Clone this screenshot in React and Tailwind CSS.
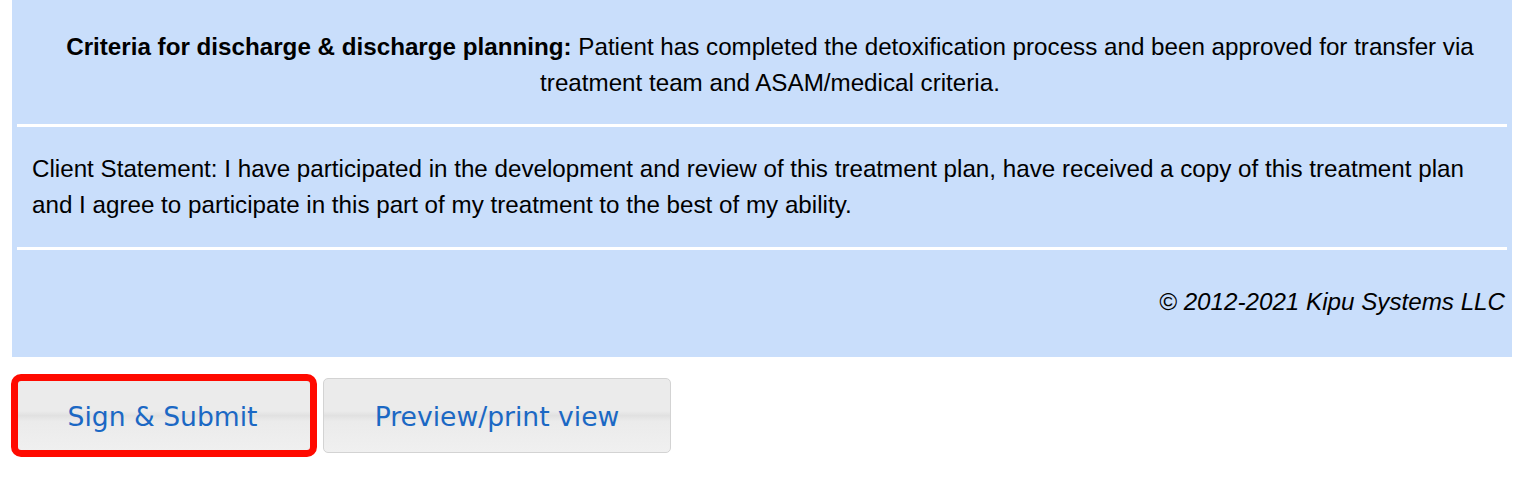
export default function App() {
  const btn =
    "relative flex items-center justify-center h-[75px] pt-[3px] rounded-[5px] border border-[#d3d3d3] bg-[linear-gradient(to_bottom,#ebebeb_0%,#ebebeb_44%,#e1e1e1_50%,#ebebeb_58%,#f0f0f0_100%)] text-[26.6px] text-[#1b68c4] font-['DejaVu_Sans',Verdana,sans-serif]";

  return (
    <div className="min-h-screen w-full bg-white pl-[12px] pr-[16px] font-['Liberation_Sans',Arial,sans-serif] text-black">
      <div className="bg-[#c9defb] text-[24.2px] leading-[36px]">
        <div className="pt-[29px] pb-[23px] pl-[20px] pr-[4px] text-center">
          <span className="font-bold">Criteria for discharge &amp; discharge planning:</span>{" "}
          Patient has completed the detoxification process and been approved for transfer via
          treatment team and ASAM/medical criteria.
        </div>
        <div className="mx-[5px] h-[3px] bg-white" />
        <div className="py-[24px] px-[20px]">
          Client Statement: I have participated in the development and review of this treatment
          plan, have received a copy of this treatment plan and I agree to participate in this part
          of my treatment to the best of my ability.
        </div>
        <div className="mx-[5px] h-[3px] bg-white" />
        <div className="pt-[34px] pb-[37px] pr-[7px] text-right italic">
          © 2012-2021 Kipu Systems LLC
        </div>
      </div>

      <div className="mt-[21px] flex gap-[10px]">
        <button className={`${btn} w-[301px]`}>
          Sign &amp; Submit
          <span className="pointer-events-none absolute -left-[2px] -top-[5px] -right-[5px] -bottom-[5px] rounded-[10px] border-[7px] border-[#ff0a00]" />
        </button>
        <button className={`${btn} w-[348px]`}>Preview/print view</button>
      </div>
    </div>
  );
}
